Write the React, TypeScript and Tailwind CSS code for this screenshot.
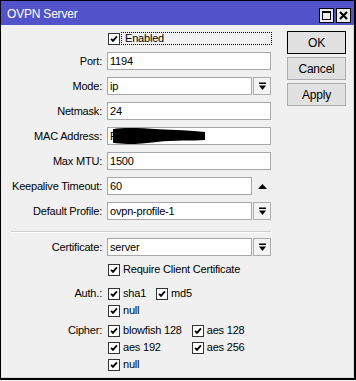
import type { ReactNode } from "react";

function DropIcon() {
  return (
    <svg width="9" height="9" viewBox="0 0 9 9">
      <rect x="1" y="0.5" width="7" height="1.5" fill="#000" />
      <path d="M1 3.5h7L4.5 8z" fill="#000" />
    </svg>
  );
}

function Box({ label, focus }: { label: string; focus?: boolean }) {
  return (
    <div className="flex items-center h-[13px]">
      <div className="w-[12px] h-[12px] shrink-0 border border-[#333] bg-white flex items-center justify-center">
        <svg width="8" height="8" viewBox="0 0 9 9">
          <path d="M1.2 4.3l2.2 2.4L7.8 1.6" fill="none" stroke="#000" strokeWidth="2" />
        </svg>
      </div>
      {focus ? (
        <div className="ml-px h-[13px] w-[151px] border border-dotted border-black flex items-center pl-[3px] leading-none">
          {label}
        </div>
      ) : (
        <span className="ml-[3px] leading-none whitespace-nowrap">{label}</span>
      )}
    </div>
  );
}

function Row({
  label,
  children,
  className = "mt-[7px]",
}: {
  label: string;
  children: ReactNode;
  className?: string;
}) {
  return (
    <div className={`flex items-center h-[18px] ${className}`}>
      <div className="w-[101px] shrink-0 text-right whitespace-nowrap">{label}</div>
      <div className="ml-[5px] w-[164px] h-full flex">{children}</div>
    </div>
  );
}

function Input({ value, full = true }: { value?: string; full?: boolean }) {
  return (
    <div
      className={`${full ? "w-[164px]" : "w-[145px]"} h-full border border-[#a8a8a8] bg-white flex items-center pl-[2px] whitespace-nowrap`}
    >
      {value}
    </div>
  );
}

function Select({ value }: { value: string }) {
  return (
    <>
      <Input value={value} full={false} />
      <div className="ml-px w-[18px] h-full border border-[#adadad] bg-[#f4f4f4] flex items-center justify-center">
        <DropIcon />
      </div>
    </>
  );
}

function Btn({ label, primary }: { label: string; primary?: boolean }) {
  return (
    <div
      className={`h-[23px] w-[59px] flex items-center justify-center bg-[#e1e1e1] border ${
        primary ? "border-black" : "border-[#adadad]"
      } text-[12px]`}
    >
      {label}
    </div>
  );
}

export default function App() {
  return (
    <div className="w-[356px] h-[381px] bg-[#f0f0f0] font-['Liberation_Sans',Arial,sans-serif] text-[11px] tracking-[-0.2px] text-black">
      <div className="w-[356px] h-[380px] border-l border-t border-r-2 border-b-2 border-black flex flex-col">
        {/* title bar */}
        <div className="h-[24px] bg-[#5252cb] flex items-center justify-between shrink-0">
          <span className="pl-[6px] text-white text-[12px] pt-[2px]">OVPN Server</span>
          <div className="flex gap-[2px] pr-[3px] pt-[4px]">
            <div className="w-[15px] h-[15px] bg-[#ececec] border border-black flex items-center justify-center">
              <div className="w-[9px] h-[9px] border border-black border-t-2" />
            </div>
            <div className="w-[15px] h-[15px] bg-[#ececec] border border-black flex items-center justify-center">
              <svg width="9" height="9" viewBox="0 0 9 9">
                <path d="M1 1l7 7M8 1L1 8" stroke="#000" strokeWidth="2" />
              </svg>
            </div>
          </div>
        </div>

        {/* body */}
        <div className="flex-1 flex border-r border-b border-[#d8d8d8]">
          <div className="w-[270px] flex flex-col pt-[7px]">
            <div className="flex items-center h-[13px]">
              <div className="w-[106px] shrink-0" />
              <div className="ml-px">
                <Box label="Enabled" focus />
              </div>
            </div>
            <Row label="Port:">
              <Input value="1194" />
            </Row>
            <Row label="Mode:">
              <Select value="ip" />
            </Row>
            <Row label="Netmask:">
              <Input value="24" />
            </Row>
            <Row label="MAC Address:">
              <div className="relative w-[164px] h-full">
                <Input value="F" />
                {/* redacted value */}
                <svg
                  className="absolute left-[5px] top-0"
                  width="94"
                  height="18"
                  viewBox="0 0 96 18"
                >
                  <path
                    d="M1 2C12 0 30 1 48 2C64 3 80 3 95 5L95 13C82 14 64 13 46 15C30 17 12 18 1 16Z"
                    fill="#000"
                  />
                </svg>
              </div>
            </Row>
            <Row label="Max MTU:">
              <Input value="1500" />
            </Row>
            <Row label="Keepalive Timeout:">
              <Input value="60" full={false} />
              <div className="ml-px w-[18px] h-full flex items-center justify-center">
                <svg width="9" height="5" viewBox="0 0 9 5">
                  <path d="M0 5h9L4.5 0z" fill="#000" />
                </svg>
              </div>
            </Row>
            <Row label="Default Profile:">
              <Select value="ovpn-profile-1" />
            </Row>

            <div className="ml-[10px] mt-[11px] w-[260px]">
              <div className="h-px bg-[#d0d0d0]" />
              <div className="h-px bg-white" />
            </div>

            <Row label="Certificate:" className="mt-[5px]">
              <Select value="server" />
            </Row>
            <div className="flex mt-[7px]">
              <div className="w-[107px] shrink-0" />
              <Box label="Require Client Certificate" />
            </div>

            <div className="flex items-start mt-[11px]">
              <div className="w-[101px] shrink-0 text-right h-[13px] leading-[13px]">Auth.:</div>
              <div className="ml-[6px] grid grid-cols-[auto_auto] gap-x-[10px] gap-y-[4px] justify-start">
                <Box label="sha1" />
                <Box label="md5" />
                <Box label="null" />
              </div>
            </div>

            <div className="flex items-start mt-[7px]">
              <div className="w-[101px] shrink-0 text-right h-[13px] leading-[13px]">Cipher:</div>
              <div className="ml-[6px] grid grid-cols-[auto_auto] gap-x-[10px] gap-y-[4px] justify-start">
                <Box label="blowfish 128" />
                <Box label="aes 128" />
                <Box label="aes 192" />
                <Box label="aes 256" />
                <Box label="null" />
              </div>
            </div>
          </div>

          <div className="ml-[16px] pt-[6px] flex flex-col gap-[3px]">
            <Btn label="OK" primary />
            <Btn label="Cancel" />
            <Btn label="Apply" />
          </div>
        </div>
      </div>
    </div>
  );
}
